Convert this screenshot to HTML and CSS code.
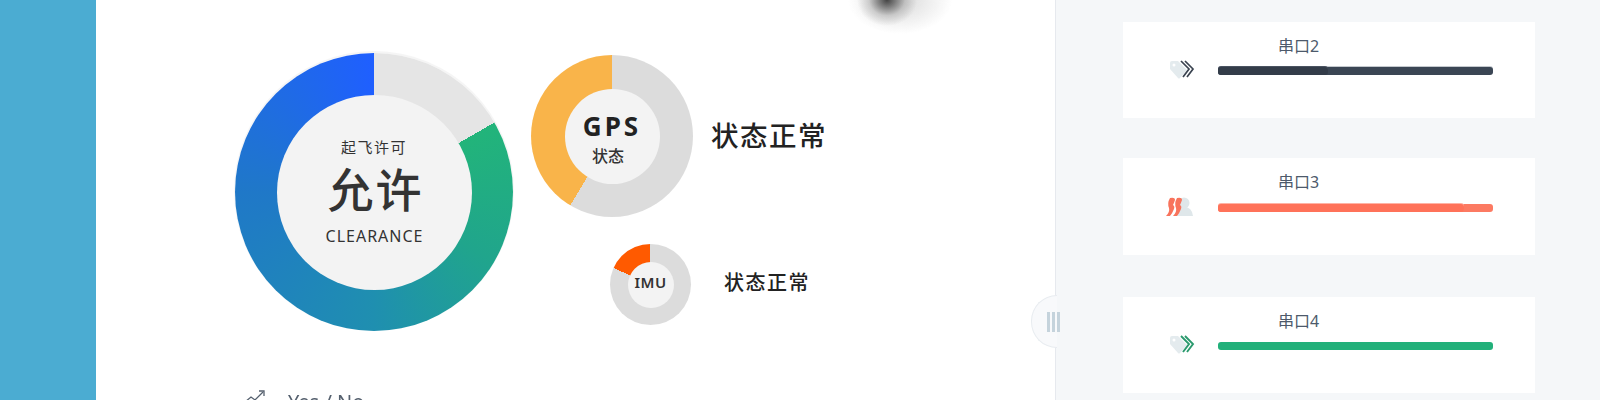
FILE: index.html
```html
<!DOCTYPE html>
<html lang="zh-CN">
<head>
    <meta charset="UTF-8">
    <meta name="viewport" content="width=device-width, initial-scale=1.0">
    <title>飞行状态</title>
    <link rel="stylesheet" href="styles.css">
</head>
<body>
    <div class="page">
        <div class="side"></div>

        <div class="main">
            <div class="blob"></div>

            <div class="charts">
                <div class="donut donut-big">
                    <div class="donut-hole hole-big">
                        <div class="big-title">起飞许可</div>
                        <div class="big-value">允许</div>
                        <div class="big-sub">CLEARANCE</div>
                    </div>
                </div>

                <div class="status-col">
                    <div class="status-row gps-row">
                        <div class="donut donut-gps">
                            <div class="donut-hole hole-gps">
                                <div class="gps-title">GPS</div>
                                <div class="gps-sub">状态</div>
                            </div>
                        </div>
                        <div class="status-text">状态正常</div>
                    </div>
                    <div class="status-row imu-row">
                        <div class="donut donut-imu">
                            <div class="donut-hole hole-imu">IMU</div>
                        </div>
                        <div class="status-text status-small">状态正常</div>
                    </div>
                </div>
            </div>

            <div class="legend">
                <svg class="legend-icon" width="22" height="16" viewBox="0 0 22 16" fill="none" stroke="#55606e" stroke-width="1.3">
                    <path d="M1 14 L7 9 L11 12 L19 4"/>
                    <path d="M15 3 H20 V8"/>
                </svg>
                <span>Yes / No</span>
            </div>
        </div>

        <div class="right">
            <div class="handle">
                <span></span><span></span><span></span>
            </div>

            <div class="card">
                <svg class="card-icon" width="28" height="20" viewBox="0 0 28 20">
                    <path d="M2 3 Q2 1 4 1 H10 L19 10 L12 18 Q11 19 10 18 L2 9 Z" fill="#e4ebee"/>
                    <circle cx="6" cy="5" r="1.5" fill="#fff"/>
                    <path d="M13 1 L21 9 L15 17 M17 1 L25 9 L19 17" fill="none" stroke="#3a4350" stroke-width="1.7"/>
                </svg>
                <div class="card-body">
                    <div class="card-label">串口2</div>
                    <div class="bar bar-dark">
                        <div class="bar-fill" style="width: 40%"></div>
                    </div>
                </div>
            </div>

            <div class="card card-mid">
                <svg class="card-icon" width="28" height="20" viewBox="0 0 28 20">
                    <circle cx="18" cy="6" r="5.5" fill="#dfe7ea"/>
                    <path d="M10 19 Q11 10 18 10 Q26 10 27 19 Z" fill="#dfe7ea"/>
                    <path d="M4 1 Q9 0 9 3 Q8 6 7 8 Q9 9 8 12 Q6 17 4 19 H0 Q4 15 3 11 Q1 6 4 1 Z" fill="#f8735c"/>
                    <path d="M11 1 Q16 0 16 3 Q15 6 14 8 Q16 9 15 12 Q13 17 11 19 H7 Q11 15 10 11 Q8 6 11 1 Z" fill="#f8735c"/>
                </svg>
                <div class="card-body">
                    <div class="card-label">串口3</div>
                    <div class="bar bar-coral">
                        <div class="bar-fill" style="width: 89.5%"></div>
                    </div>
                </div>
            </div>

            <div class="card card-last">
                <svg class="card-icon" width="28" height="20" viewBox="0 0 28 20">
                    <path d="M2 3 Q2 1 4 1 H10 L19 10 L12 18 Q11 19 10 18 L2 9 Z" fill="#e4ebee"/>
                    <circle cx="6" cy="5" r="1.5" fill="#fff"/>
                    <path d="M13 1 L21 9 L15 17 M17 1 L25 9 L19 17" fill="none" stroke="#2b9a6e" stroke-width="1.9"/>
                </svg>
                <div class="card-body">
                    <div class="card-label">串口4</div>
                    <div class="bar bar-green"></div>
                </div>
            </div>
        </div>
    </div>
</body>
</html>
```

FILE: styles.css
```css
* {
    box-sizing: border-box;
}
html, body {
    margin: 0;
    height: 400px;
    overflow: hidden;
}
body {
    font-family: "Noto Sans", "Noto Sans CJK SC", sans-serif;
    color: #333;
    background-color: #fff;
}
.page {
    display: flex;
    height: 400px;
    filter: blur(0.35px);
}
.side {
    width: 96px;
    background-color: #4bacd2;
}
.main {
    position: relative;
    width: 959px;
    padding: 53px 0 0 139px;
    background-color: #fff;
}
.blob {
    position: absolute;
    left: 750px;
    top: -35px;
    width: 110px;
    height: 70px;
    background:
        radial-gradient(ellipse 30px 26px at 41px 35px, rgba(40, 40, 40, 0.85), rgba(120, 120, 120, 0.3) 60%, rgba(255, 255, 255, 0) 100%),
        radial-gradient(ellipse 52px 34px at 54px 35px, rgba(160, 160, 160, 0.4), rgba(255, 255, 255, 0) 100%);
}
.charts {
    display: flex;
    gap: 18px;
}

/* donuts */
.donut {
    display: flex;
    align-items: center;
    justify-content: center;
    border-radius: 50%;
    flex-shrink: 0;
}
.donut-hole {
    display: flex;
    flex-direction: column;
    align-items: center;
    justify-content: center;
    border-radius: 50%;
    background-color: #f3f3f3;
}
.donut-big {
    width: 278px;
    height: 278px;
    box-shadow: 0 -1px 0 1px rgba(235, 235, 235, 0.5);
    background: conic-gradient(#e5e5e5 0 60deg, #22b47a 60deg, #20a58c 120deg, #1f8fb0 180deg, #1f78c8 270deg, #1f5fff 360deg);
}
.hole-big {
    width: 195px;
    height: 195px;
}
.big-title {
    font-size: 15px;
    line-height: 22px;
    letter-spacing: 1.5px;
    margin-top: -2px;
}
.big-value {
    padding-left: 3px;
    font-size: 46px;
    line-height: 63px;
    letter-spacing: 2px;
    font-weight: 500;
}
.big-sub {
    padding-left: 1px;
    font-size: 16px;
    line-height: 22px;
    letter-spacing: 1px;
    margin-top: 4px;
}
.status-col {
    display: flex;
    flex-direction: column;
}
.status-row {
    display: flex;
    align-items: center;
}
.gps-row {
    margin-top: 2px;
}
.imu-row {
    margin-top: 27px;
    margin-left: 79px;
}
.donut-gps {
    width: 162px;
    height: 162px;
    background: conic-gradient(#dcdcdc 0 211deg, #f9b44a 211deg 360deg);
}
.hole-gps {
    width: 95px;
    height: 95px;
}
.gps-title {
    font-size: 26px;
    line-height: 32px;
    font-weight: 700;
    letter-spacing: 3px;
    color: #222;
    margin-top: 6px;
}
.gps-sub {
    font-size: 16px;
    line-height: 24px;
    font-weight: 500;
    margin-top: 2px;
    margin-right: 8px;
}
.donut-imu {
    width: 81px;
    height: 81px;
    background: conic-gradient(#dcdcdc 0 294deg, #ff5a00 294deg 360deg);
}
.hole-imu {
    width: 46px;
    height: 46px;
    padding-bottom: 6px;
    font-size: 15px;
    font-weight: 600;
    letter-spacing: 0.5px;
}
.status-text {
    margin-left: 18px;
    margin-bottom: 4px;
    font-size: 27.5px;
    letter-spacing: 1.5px;
    font-weight: 500;
    color: #222;
}
.status-small {
    margin-left: 33px;
    margin-bottom: 6px;
    font-size: 20px;
}
.legend {
    display: flex;
    align-items: flex-start;
    gap: 22px;
    margin-top: 57px;
    margin-left: 9px;
    font-size: 20px;
    color: #55606e;
}
.legend-icon {
    flex-shrink: 0;
}

/* right panel */
.right {
    position: relative;
    flex: 1;
    padding: 22px 0 0 67px;
    background-color: #f5f7f9;
    border-left: 1px solid #e6e9ee;
    display: flex;
    flex-direction: column;
    gap: 40px;
}
.handle {
    position: absolute;
    left: -25px;
    top: 295px;
    width: 26px;
    height: 53px;
    display: flex;
    align-items: center;
    gap: 2px;
    padding-left: 15px;
    border: 1px solid #e8ecf0;
    border-right: 0;
    border-radius: 26px 0 0 26px;
    background-color: #f8f9fb;
}
.handle span {
    flex-shrink: 0;
    width: 3px;
    height: 20px;
    background-color: #c5d3dc;
}
.card {
    width: 412px;
    height: 96px;
    display: flex;
    align-items: center;
    padding-left: 45px;
    background-color: #fff;
}
.card-mid {
    height: 97px;
}
.card-mid .card-icon {
    margin: 0 2px 0 -2px;
}
.card-last {
    margin-top: 2px;
}
.card-icon {
    flex-shrink: 0;
}
.card-body {
    align-self: flex-start;
    margin-left: 22px;
    padding-top: 13px;
    width: 275px;
}
.card-label {
    padding-left: 60px;
    font-size: 16px;
    line-height: 22px;
    color: #4d5a6b;
    margin-bottom: 10px;
}
.bar {
    height: 8px;
    border-radius: 3px;
}
.bar-fill {
    height: 100%;
    border-radius: 3px;
}
.bar-dark {
    background-color: #3b4654;
    box-shadow: 0 -1px 0 #c4c9ce;
}
.bar-dark .bar-fill {
    background-color: #333c49;
    box-shadow: 0 -1px 0 #4a5361;
}
.bar-coral {
    margin-top: 11px;
    background-color: #fc7a62;
}
.bar-coral .bar-fill {
    background-color: #ff7259;
    box-shadow: 0 -1px 0 #ffb3a5;
}
.bar-green {
    background-color: #22b07a;
}
```
